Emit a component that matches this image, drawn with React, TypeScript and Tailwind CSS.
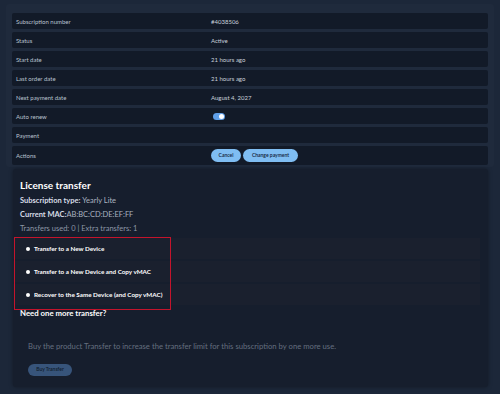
import React from "react";

const rows: { label: string; value?: string; kind?: "toggle" | "actions" }[] = [
  { label: "Subscription number", value: "#4038506" },
  { label: "Status", value: "Active" },
  { label: "Start date", value: "21 hours ago" },
  { label: "Last order date", value: "21 hours ago" },
  { label: "Next payment date", value: "August 4, 2027" },
  { label: "Auto renew", kind: "toggle" },
  { label: "Payment" },
];

const options = [
  "Transfer to a New Device",
  "Transfer to a New Device and Copy vMAC",
  "Recover to the Same Device (and Copy vMAC)",
];

export default function App() {
  return (
    <div
      className="w-[500px] h-[394px] overflow-hidden bg-[#1c2739] text-[#c9d1dc]"
      style={{ fontFamily: "Lato, 'Open Sans', sans-serif" }}
    >
      <div className="pt-[4px] px-[6px]">
        <div className="bg-[#1f2a3c] rounded-[3px] px-[6px] pt-[9px] pb-[2px] flex flex-col gap-[3px]">
          {rows.map((r) => (
            <div
              key={r.label}
              className="h-[16px] bg-[#121a28] rounded-[2px] flex items-center text-[6px]"
            >
              <div className="w-[199px] pl-[4px] text-[#b9c2cf]">{r.label}</div>
              <div className="flex items-center text-[#c9d1dc]">
                {r.value}
                {r.kind === "toggle" && (
                  <div className="w-[12px] h-[7px] rounded-full bg-[#5f9fe8] flex items-center justify-end pr-[1px] ml-[2px]">
                    <div className="w-[5px] h-[5px] rounded-full bg-white" />
                  </div>
                )}
              </div>
            </div>
          ))}
          <div className="h-[19px] bg-[#121a28] rounded-[2px] flex items-center text-[6px]">
            <div className="w-[199px] pl-[4px] text-[#b9c2cf]">Actions</div>
            <div className="flex items-center gap-[2px]">
              <button className="h-[13px] w-[30px] rounded-full bg-[#7fbdf2] text-[#102036] text-[5px] font-semibold">
                Cancel
              </button>
              <button className="h-[13px] w-[55px] rounded-full bg-[#7fbdf2] text-[#102036] text-[5px] font-semibold">
                Change payment
              </button>
            </div>
          </div>
        </div>
      </div>
      <div className="px-[13px] pr-[12px] pt-[2px]">
        <div className="bg-[#161e2d] rounded-[3px] h-[218px] pt-[9px] shadow-[0_0_4px_rgba(0,0,0,0.35)]">
          <div className="px-[7px]">
            <div className="text-[10px] font-bold text-white leading-[14px]">License transfer</div>
            <div className="mt-[2px] text-[7.5px] leading-[14px] text-[#aab3c0]">
              <span className="font-bold text-[#d7dde6]">Subscription type:</span> Yearly Lite
            </div>
            <div className="text-[7.5px] leading-[14px] text-[#aab3c0]">
              <span className="font-bold text-[#d7dde6]">Current MAC:</span>AB:BC:CD:DE:EF:FF
            </div>
            <div className="text-[7.5px] leading-[14px] text-[#8d97a6]">
              Transfers used: 0 | Extra transfers: 1
            </div>
          </div>
          <div className="relative mt-[2px] pr-[8px]">
            <div className="flex flex-col gap-[2px]">
              {options.map((o) => (
                <div key={o} className="h-[21px] bg-[#1a202e] flex items-center pl-[13px] text-[6.3px] font-bold text-white">
                  <div className="w-[4px] h-[4px] rounded-full bg-white mr-[4px]" />
                  {o}
                </div>
              ))}
            </div>
            <div className="absolute left-[1px] top-[-1px] w-[157px] h-[73px] border border-[#c4142c]" />
          </div>
          <div className="px-[7px] mt-[2px] text-[7.8px] font-bold text-white leading-[12px]">
            Need one more transfer?
          </div>
          <div className="px-[15px] mt-[21px] text-[7.7px] text-[#646e7f] leading-[12px]">
            Buy the product Transfer to increase the transfer limit for this subscription by one more use.
          </div>
          <div className="px-[15px] mt-[1px]">
            <button className="h-[12px] w-[44px] rounded-full bg-[#37547a] text-[#0f1b2b] text-[5px] font-semibold">
              Buy Transfer
            </button>
          </div>
        </div>
      </div>
    </div>
  );
}
